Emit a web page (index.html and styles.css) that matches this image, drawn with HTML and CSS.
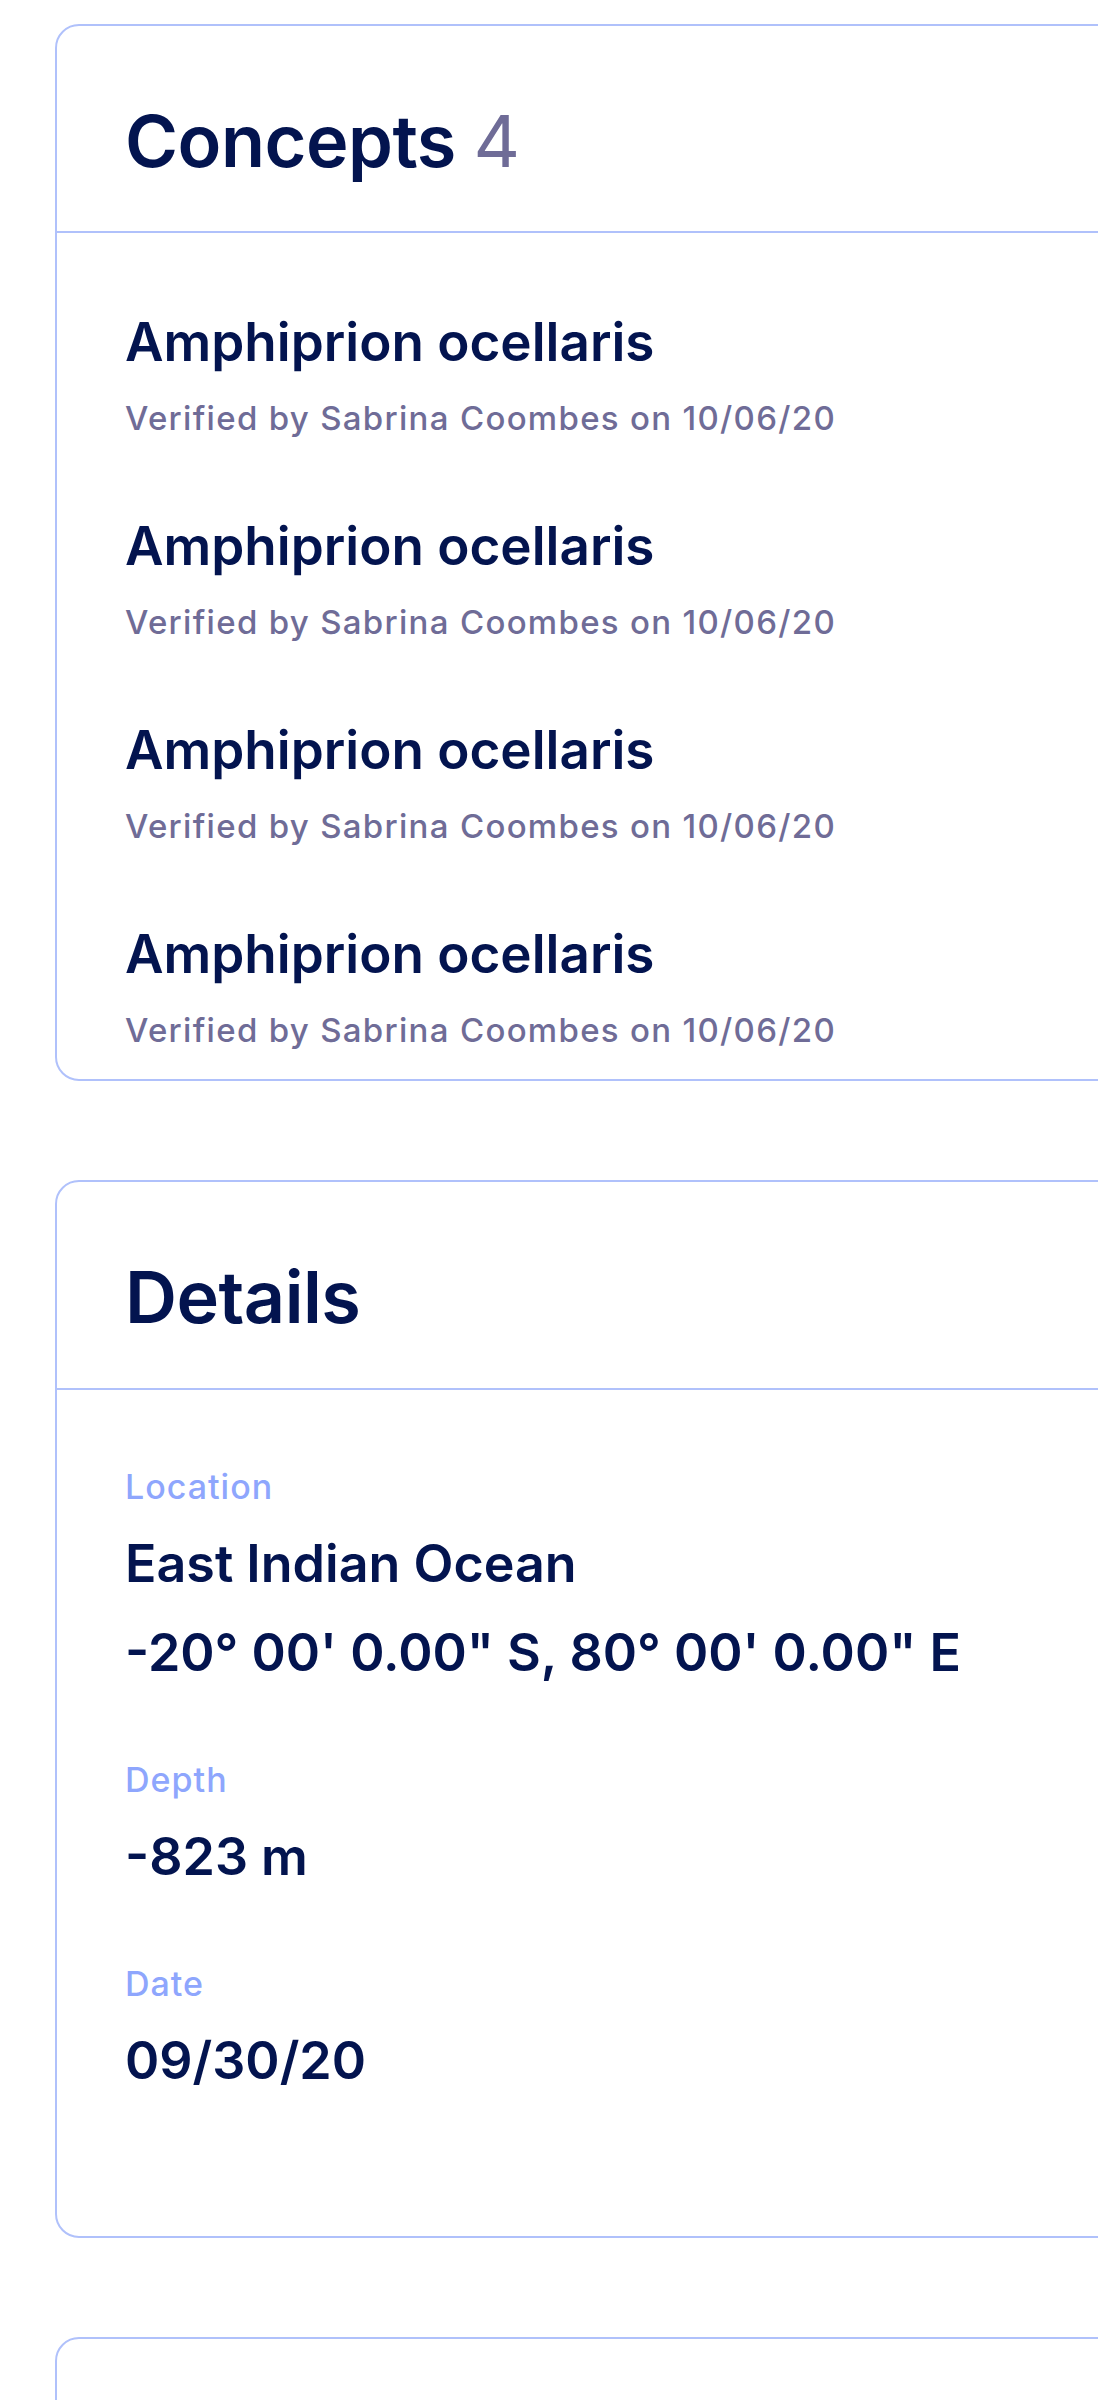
FILE: index.html
```html
<!DOCTYPE html>
<html lang="en">
<head>
<meta charset="utf-8">
<title>Observation</title>
<link rel="stylesheet" href="styles.css">
</head>
<body>
<main class="page">
  <section class="card">
    <header class="card-header">
      <h2 class="card-title">Concepts <span class="count">4</span></h2>
    </header>
    <ul class="concept-list">
      <li class="concept">
        <div class="concept-name">Amphiprion ocellaris</div>
        <div class="concept-meta">Verified by Sabrina Coombes on 10/06/20</div>
      </li>
      <li class="concept">
        <div class="concept-name">Amphiprion ocellaris</div>
        <div class="concept-meta">Verified by Sabrina Coombes on 10/06/20</div>
      </li>
      <li class="concept">
        <div class="concept-name">Amphiprion ocellaris</div>
        <div class="concept-meta">Verified by Sabrina Coombes on 10/06/20</div>
      </li>
      <li class="concept">
        <div class="concept-name">Amphiprion ocellaris</div>
        <div class="concept-meta">Verified by Sabrina Coombes on 10/06/20</div>
      </li>
    </ul>
  </section>

  <section class="card">
    <header class="card-header">
      <h2 class="card-title">Details</h2>
    </header>
    <dl class="details">
      <div class="field">
        <dt class="field-label">Location</dt>
        <dd class="field-value">East Indian Ocean</dd>
        <dd class="field-value">-20° 00' 0.00" S, 80° 00' 0.00" E</dd>
      </div>
      <div class="field">
        <dt class="field-label">Depth</dt>
        <dd class="field-value">-823 m</dd>
      </div>
      <div class="field">
        <dt class="field-label">Date</dt>
        <dd class="field-value">09/30/20</dd>
      </div>
    </dl>
  </section>

  <section class="card card-empty"></section>
</main>
</body>
</html>
```

FILE: styles.css
```css
html, body {
  margin: 0;
  padding: 0;
  background: #ffffff;
  overflow-x: hidden;
}

body {
  font-family: "Inter", "Noto Sans", "Liberation Sans", sans-serif;
  color: #03144f;
}

.page {
  display: flex;
  flex-direction: column;
  gap: 99px;
  padding: 24px 0 0 55px;
}

.card {
  width: 1200px;
  border: 2px solid #b0c1fb;
  border-radius: 24px;
  background: #ffffff;
}

.card-header {
  padding: 72px 68px 47px;
  border-bottom: 2px solid #b0c1fb;
}

.card-title {
  margin: 0;
  font-size: 72px;
  line-height: 1.2;
  font-weight: 600;
  letter-spacing: -0.5px;
  color: #03144f;
}

.count {
  font-weight: 400;
  color: #6f6c97;
}

.concept-list {
  list-style: none;
  margin: 0;
  padding: 77px 68px 29px;
  display: flex;
  flex-direction: column;
  gap: 76px;
}

.concept {
  display: flex;
  flex-direction: column;
  gap: 24px;
}

.concept-name {
  font-size: 53px;
  line-height: 64px;
  font-weight: 600;
  color: #03144f;
}

.concept-meta {
  font-size: 33px;
  line-height: 40px;
  font-weight: 500;
  letter-spacing: 1.3px;
  color: #6f6c97;
}

.details {
  margin: 0;
  padding: 77px 68px 143px;
  display: flex;
  flex-direction: column;
  gap: 75px;
}

.field {
  display: flex;
  flex-direction: column;
  gap: 24px;
}

.field-label {
  font-size: 34px;
  line-height: 40px;
  font-weight: 500;
  letter-spacing: 1px;
  color: #8ea6fd;
}

.field-value {
  margin: 0;
  font-size: 52px;
  line-height: 65px;
  font-weight: 600;
  color: #03144f;
}

.card-empty {
  height: 300px;
}
```
